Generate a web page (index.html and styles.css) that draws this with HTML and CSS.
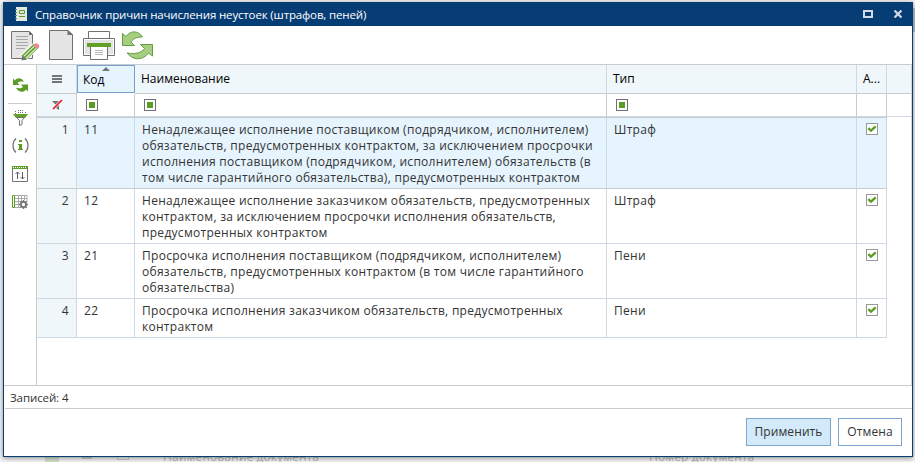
FILE: index.html
```html
<!DOCTYPE html>
<html lang="ru">
<head>
<meta charset="utf-8">
<title>Справочник</title>
<link rel="stylesheet" href="styles.css">
</head>
<body>
<div class="backdrop">
  <div class="backdrop-top"><i></i></div>
  <div class="backdrop-row"><i class="b1"></i><i class="b2"></i><i class="b3"></i><span class="doc-name">Наименование документа</span><span class="doc-num">Номер документа</span></div>
</div>
<div class="window">
  <header class="titlebar">
    <svg class="book" width="12" height="14" viewBox="0 0 12 14"><path fill="#e4e9e0" d="M1 0h11v14H1z"/><path fill="#6a7f8e" d="M0 2h2v1H0zM0 5h2v1H0zM0 8h2v1H0zM0 11h2v1H0z"/><path fill="none" stroke="#5b9c25" d="M4.500 3.500h5v3h-5zM4 9.500h6"/></svg>
    <span class="title">Справочник причин начисления неустоек (штрафов, пеней)</span>
    <svg class="max" width="10" height="8" viewBox="0 0 10 8"><path fill="none" stroke="#d0d9e4" stroke-width="2" d="M1 1h8v6H1z"/></svg>
    <svg class="close" width="8" height="8" viewBox="0 0 8 8"><path stroke="#d0d9e4" stroke-width="2.200" d="M.5.5l7 7M7.500.5l-7 7"/></svg>
  </header>
  <div class="toolbar">
    <svg width="29" height="31" viewBox="0 0 29 31"><path fill="#e5e5e5" stroke="#6f7174" d="M.5 1.500h18l3 3v24H.5z"/><path fill="none" stroke="#a6a6a6" d="M5 6.500h12M5 9.500h12M5 12.500h12M5 15.500h12M5 18.500h9"/><path fill="#6f7174" d="M18 1v4h4z"/><path stroke="#fff" stroke-width="8" d="M12 28L26 15"/><path stroke="#5b9c25" stroke-width="6" d="M12.500 28L25 16"/><path stroke="#d9ecc8" stroke-width="1.200" d="M12.500 26.500L24 15.500M14.500 28.500L26 17.500"/><path fill="#ee8793" d="M22.500 15.500c1-2.500 3-3 4.800-1.300s1 4-1.300 5z"/><path fill="#6f7174" d="M10.500 30.500l1-5 4 4z"/></svg>
    <svg class="t2" width="24" height="30" viewBox="0 0 24 30"><path fill="#e5e5e5" stroke="#6f7174" d="M.5.5h18.500l4.500 4v25H.5z"/><path fill="#6f7174" d="M18.500 0v5h5.500z"/></svg>
    <svg class="t3" width="32" height="29" viewBox="0 0 32 29"><path fill="#fff" stroke="#6f7174" d="M5.500 9.500v-9h21v9"/><path fill="#fff" stroke="#6f7174" d="M.5 7.500h31v17H.5z"/><path fill="#e3e3e3" d="M2 9h28v14H2z"/><path fill="#fff" stroke="#6f7174" d="M7.500 15.500h17v13h-17z"/><path fill="#61a127" d="M4 12h24v4H4z"/><path stroke="#b7b7b7" d="M12 19.500h8M12 21.500h8M12 23.500h8"/></svg>
    <svg class="t4" width="31" height="29" viewBox="0 0 31 29"><g fill="#a5ce80" stroke="#679e45"><path d="M.5 2.500v12h12L9 11c2.500-4 6.500-5 11.500-5C16-1 8-.5 4 5.500z"/><path d="M30.500 13.500h-12l4 4c-3 4-8 6-17.500 4.500 6 7.500 15.500 8 21.500 0l4 3z"/></g></svg>
  </div>
  <div class="workspace">
    <nav class="sidebar">
      <svg class="s1" width="15" height="14" viewBox="0 0 15 14"><g fill="#5b9c25"><path d="M0 .5V7h6.500L4.500 5c1.500-1.500 3.500-1.800 6.500-1.300C8.500-.8 4-.8 2 2.500z"/><path d="M15 6.500H8l2 2.500c-1.500 1.500-4 1.600-7 .8 2.500 4.700 7.500 5.200 10 1.700l2 2z"/></g></svg>
      <i class="separator"></i>
      <svg class="s2" width="15" height="16" viewBox="0 0 15 16"><path fill="#61a127" d="M0 4h15l-3 4H3z"/><path stroke="#737373" stroke-dasharray="1 1" d="M2.500 1v3M5.500 0v4M7.500 0v4M9.500 0v4M12.500 2v2"/><path fill="#fff" stroke="#737373" d="M3.500 7.500h8L9 10.500v4l-2.500 1v-5z"/></svg>
      <svg class="s3" width="17" height="15" viewBox="0 0 17 15"><path fill="none" stroke="#737373" stroke-width="1.200" d="M4 .5C0 4 0 11 4 14.500M13 .5c4 3.500 4 10.500 0 14"/><path fill="#5b9c25" d="M7 2h3v2H7zM6 6h4v5h1v1H6v-1h1V7H6z"/></svg>
      <svg class="s4" width="16" height="16" viewBox="0 0 16 16"><path fill="#fff" stroke="#737373" d="M.5.5h15v15H.5z"/><path fill="#61a127" d="M0 0h16v3H0z"/><path stroke="#fff" stroke-dasharray="1 1" d="M1 1.500h14"/><path fill="none" stroke="#5e5e5e" d="M5.500 6v7M3.500 8l2-2 2 2M10.500 6v7M8.500 11l2 2 2-2"/></svg>
      <svg class="s5" width="16" height="15" viewBox="0 0 16 15"><path fill="none" stroke="#aaa" d="M3 .5h12M3 3.500h12M3 6.500h7M3 9.500h5M6.500 0v13M9.500 0v7M12.500 0v5M15 0v6M3 12.500h5"/><path fill="#fff" stroke="#5b9c25" d="M.5.5h2v12h-2z"/><circle cx="11.500" cy="9.500" r="2.600" fill="#fff" stroke="#737373" stroke-width="1.700"/><path stroke="#737373" stroke-width="1.500" d="M11.500 5v2M11.500 12v2M7 9.500h2M14 9.500h2M8.300 6.300l1.500 1.500M13.200 11.200l1.500 1.500M14.700 6.300l-1.500 1.500M9.800 11.200l-1.500 1.500"/></svg>
    </nav>
    <main class="grid">
      <div class="row head">
        <div class="num"><i class="menu"></i></div><div class="sorted">Код<i class="arrow"></i></div><div>Наименование</div><div>Тип</div><div>А...</div><div class="tail"></div>
      </div>
      <div class="row filter">
        <div class="num"><svg width="11" height="11" viewBox="0 0 11 11"><path fill="#737373" d="M0 2h10L7 5.500V11L4 9V6z"/><path stroke="#eff7fb" stroke-width="3" d="M1 10l9-9"/><path stroke="#e31e24" stroke-width="1.700" d="M1 10l9-9"/></svg></div><div><i class="box"></i></div><div><i class="box"></i></div><div><i class="box"></i></div><div></div><div class="tail"></div>
      </div>
      <div class="row data selected">
        <div class="num">1</div><div>11</div><div class="name">Ненадлежащее исполнение поставщиком (подрядчиком, исполнителем)<br>обязательств, предусмотренных контрактом, за исключением просрочки<br>исполнения поставщиком (подрядчиком, исполнителем) обязательств (в<br>том числе гарантийного обязательства), предусмотренных контрактом</div><div>Штраф</div><div class="state"><svg class="check" viewBox="0 0 10 10"><path d="M1.300 4.200L4 6.700l4.700-4.400"/></svg></div>
      </div>
      <div class="row data">
        <div class="num">2</div><div>12</div><div class="name">Ненадлежащее исполнение заказчиком обязательств, предусмотренных<br>контрактом, за исключением просрочки исполнения обязательств,<br>предусмотренных контрактом</div><div>Штраф</div><div class="state"><svg class="check" viewBox="0 0 10 10"><path d="M1.300 4.200L4 6.700l4.700-4.400"/></svg></div>
      </div>
      <div class="row data">
        <div class="num">3</div><div>21</div><div class="name">Просрочка исполнения поставщиком (подрядчиком, исполнителем)<br>обязательств, предусмотренных контрактом (в том числе гарантийного<br>обязательства)</div><div>Пени</div><div class="state"><svg class="check" viewBox="0 0 10 10"><path d="M1.300 4.200L4 6.700l4.700-4.400"/></svg></div>
      </div>
      <div class="row data">
        <div class="num">4</div><div>22</div><div class="name">Просрочка исполнения заказчиком обязательств, предусмотренных<br>контрактом</div><div>Пени</div><div class="state"><svg class="check" viewBox="0 0 10 10"><path d="M1.300 4.200L4 6.700l4.700-4.400"/></svg></div>
      </div>
    </main>
  </div>
  <div class="status">Записей: 4</div>
  <footer class="actions"><button class="primary">Применить</button><button>Отмена</button></footer>
</div>
</body>
</html>
```

FILE: styles.css
```css
* { box-sizing: border-box; }
body { margin: 0; width: 915px; height: 462px; overflow: hidden; position: relative; background: #f4f4f4; font: 12px/16px "Open Sans", "Noto Sans", sans-serif; color: #333; }
svg { display: block; flex: none; }
.backdrop { height: 462px; display: flex; flex-direction: column; justify-content: space-between; color: #b5b5b5; }
.backdrop-top { height: 32px; padding-top: 8px; display: flex; justify-content: flex-end; }
.backdrop-top i { width: 3px; height: 24px; background: #b9c2cc; }
.backdrop-row { height: 14px; display: flex; padding-left: 14px; font-size: 12px; letter-spacing: .1px; line-height: 18px; white-space: nowrap; }
.backdrop-row i { flex: none; }
.b1 { width: 14px; margin-left: 31px; height: 14px; background: #d3dfc9; }
.b2 { width: 10px; height: 2px; margin: 9px 0 0 23px; background: #ccc; }
.b3 { width: 12px; height: 12px; margin-left: 25px; border: 1px solid #ccc; }
.doc-name { width: 486px; margin-left: 34px; }
.window { position: absolute; left: 3px; top: 2px; width: 910px; height: 455px; border: 1px solid #073d75; border-top: 0; background: #fff; box-shadow: 0 1px 5px rgba(0,0,0,.45); display: flex; flex-direction: column; }
.titlebar { height: 24px; flex: none; background: #073d75; color: #fff; display: flex; align-items: center; padding: 0 10px 0 11px; }
.title { flex: 1; margin-left: 8px; white-space: nowrap; font-size: 11.5px; letter-spacing: -.15px; padding-top: 1px; }
.max { margin-top: -1px; }
.close { margin: -1px 0 0 21px; }
.toolbar { height: 38px; flex: none; display: flex; padding: 4px 0 0 7px; }
.t2 { margin-left: 9px; }
.t3 { margin: 1px 0 0 10px; }
.t4 { margin: 1px 0 0 7px; }
.workspace { height: 321px; flex: none; display: flex; border-top: 1px solid #c9cbce; }
.sidebar { width: 33px; border-right: 1px solid #c9cbce; display: flex; flex-direction: column; align-items: flex-start; padding: 13px 0 0 4px; }
.s1, .s2 { margin-left: 5px; }
.separator { width: 24px; height: 1px; background: #c9cbce; margin: 11px 0 6px; }
.s3 { margin: 12px 0 0 4px; }
.s4 { margin: 13px 0 0 4px; }
.s5 { margin: 13px 0 0 4px; }
.grid { flex: 1; border-right: 1px solid #d5d7da; }
.row { display: grid; grid-template-columns: 40px 58px 472px 250px 30px 24px; }
.row > div { border-right: 1px solid #cfd9e5; border-bottom: 1px solid #cfd9e5; }
.row > .tail { border-right: 0; }
.head > div { height: 29px; background: #eff7fb; border-bottom-color: #c8ccd0; color: #000; padding: 6px; white-space: nowrap; }
.head > .sorted { position: relative; height: 28px; background: #e6f4fe; border: 1px solid #75a1cf; padding: 6px 5px; }
.arrow { position: absolute; left: 24px; top: 1px; border: 4px solid transparent; border-top: 0; border-bottom-color: #737678; }
.menu { display: block; width: 10px; height: 8px; margin: 4px 0 0 9px; border-top: 2px solid #737678; border-bottom: 2px solid #737678; background: linear-gradient(#737678, #737678) 0 1px / 10px 2px no-repeat; }
.filter > div { height: 23px; padding: 5px 9px; border-right-color: #c9cbce; }
.filter > .num { padding: 5px 15px; }
.row > .num { background: #eff7fb; }
.filter { margin-bottom: 1px; }
.box { display: block; width: 12px; height: 12px; border: 1px solid #6f7174; background: linear-gradient(#5b9c25, #5b9c25) center / 6px 6px no-repeat; }
.data { font-size: 12px; letter-spacing: .285px; white-space: nowrap; }
.data > div { padding: 4px 7px 2px; }
.data > .num { text-align: right; }
.selected > div { background: #e6f4fe; border-bottom-color: #c8ccd0; }
.data > .state { padding: 5px 9px; }
.check { width: 12px; height: 12px; border: 1px solid #999; background: #fff; fill: none; stroke: #5b9c25; stroke-width: 2.300; }
.selected > div { box-shadow: 0 -1px #c8ccd0; }
.status { height: 23px; flex: none; border-top: 1px solid #c9cbce; padding: 4px 6px; font-size: 11.500px; letter-spacing: -.1px; }
.actions { flex: 1; border-top: 1px solid #c9cbce; margin-left: 1px; padding: 9px 10px 0 0; display: flex; justify-content: flex-end; gap: 7px; }
button { width: 64px; height: 28px; padding: 0; border: 1px solid #7fa6d2; background: #fff; font: 12px/16px "Open Sans", sans-serif; letter-spacing: .1px; color: #333; white-space: nowrap; }
button.primary { width: 85px; background: #d2eaf9; }
```
